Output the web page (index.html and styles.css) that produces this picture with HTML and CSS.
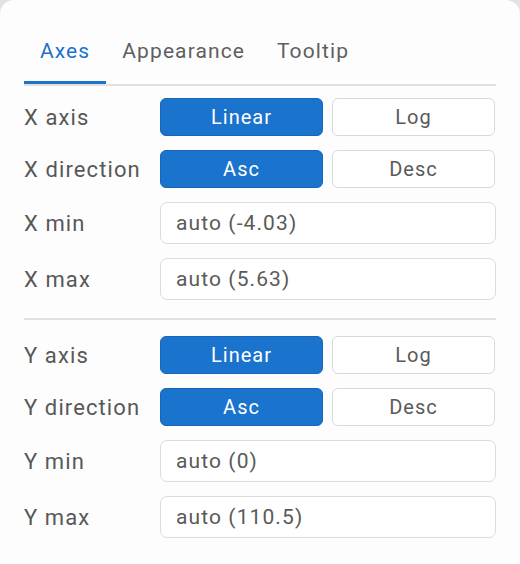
FILE: index.html
```html
<!DOCTYPE html>
<html>
<head>
<meta charset="utf-8">
<link rel="stylesheet" href="styles.css">
</head>
<body>
<div class="panel">
  <div class="tabs">
    <div class="tab active">Axes</div>
    <div class="tab">Appearance</div>
    <div class="tab">Tooltip</div>
  </div>
  <div class="section">
    <div class="row">
      <div class="label">X axis</div>
      <div class="seg"><div class="btn on">Linear</div><div class="btn">Log</div></div>
    </div>
    <div class="row">
      <div class="label">X direction</div>
      <div class="seg"><div class="btn on">Asc</div><div class="btn">Desc</div></div>
    </div>
    <div class="row">
      <div class="label">X min</div>
      <div class="input">auto (-4.03)</div>
    </div>
    <div class="row">
      <div class="label">X max</div>
      <div class="input">auto (5.63)</div>
    </div>
  </div>
  <div class="divider"></div>
  <div class="section second">
    <div class="row">
      <div class="label">Y axis</div>
      <div class="seg"><div class="btn on">Linear</div><div class="btn">Log</div></div>
    </div>
    <div class="row">
      <div class="label">Y direction</div>
      <div class="seg"><div class="btn on">Asc</div><div class="btn">Desc</div></div>
    </div>
    <div class="row">
      <div class="label">Y min</div>
      <div class="input">auto (0)</div>
    </div>
    <div class="row">
      <div class="label">Y max</div>
      <div class="input">auto (110.5)</div>
    </div>
  </div>
</div>
</body>
</html>
```
FILE: styles.css
```css
html, body {
  margin: 0;
  padding: 0;
  background: #dfe3e3;
}
body {
  width: 520px;
  height: 564px;
  overflow: hidden;
  font-family: Roboto, "Liberation Sans", Arial, sans-serif;
  color: #555;
}
.panel {
  width: 520px;
  height: 580px;
  box-sizing: border-box;
  background: #fdfdfd;
  border-radius: 14px;
  padding: 32px 24px 0 24px;
}
.tabs {
  display: flex;
  border-bottom: 2px solid #e2e2e2;
  width: 472px;
}
.tab {
  font-size: 21px;
  line-height: 24px;
  letter-spacing: 1.1px;
  padding: 7px 16px 18px 16px;
  color: #5f5f5f;
  border-bottom: 3px solid transparent;
}
.tab.active {
  color: #1a73cc;
  border-bottom-color: #1a73cc;
}
.section {
  display: flex;
  flex-direction: column;
  gap: 14px;
  padding-top: 12px;
}
.section.second {
  padding-top: 16px;
}
.row {
  display: flex;
  align-items: center;
}
.label {
  width: 136px;
  font-size: 22px;
  letter-spacing: 1.1px;
  color: #585858;
}
.seg {
  display: flex;
  gap: 9px;
}
.btn {
  width: 161px;
  height: 36px;
  border: 1px solid #d9d9d9;
  border-radius: 6px;
  background: #fff;
  font-size: 20px;
  letter-spacing: 1px;
  display: flex;
  align-items: center;
  justify-content: center;
  color: #595959;
}
.btn.on {
  background: #1a73cc;
  border-color: #1766b8;
  color: #fff;
}
.input {
  width: 319px;
  height: 40px;
  border: 1px solid #dcdcdc;
  border-radius: 7px;
  background: #fff;
  font-size: 21px;
  letter-spacing: 1.1px;
  display: flex;
  align-items: center;
  padding-left: 15px;
  color: #5a5a5a;
}
.divider {
  height: 2px;
  background: #e2e2e2;
  margin-top: 18px;
  width: 472px;
}
```
